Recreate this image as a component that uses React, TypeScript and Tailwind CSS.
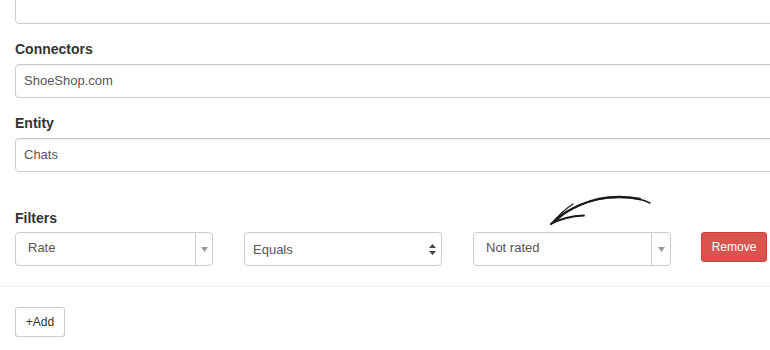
import React from "react";

const inputCls =
  "h-[34px] w-[800px] rounded-[4px] border border-[#cccccc] bg-white shadow-[inset_0_1px_1px_rgba(0,0,0,0.075)] flex items-center pl-[8px] text-[13px] text-[#555555]";

function Caret() {
  return (
    <svg width="7" height="5" viewBox="0 0 7 5">
      <path d="M0 0 L7 0 L3.5 5 Z" fill="#999999" />
    </svg>
  );
}

export default function App() {
  return (
    <div className="relative w-[770px] h-[350px] overflow-hidden bg-white text-[#333333] font-['Liberation_Sans',Arial,sans-serif]">
      <div className="pl-[15px]">
        <div className={"mt-[-10px] " + inputCls} />

        <div className="mt-[15px] mb-[5px] text-[14px] leading-[20px] font-bold">Connectors</div>
        <div className={inputCls}>ShoeShop.com</div>

        <div className="mt-[15px] mb-[5px] text-[14px] leading-[20px] font-bold">Entity</div>
        <div className={inputCls}>Chats</div>

        <div className="mt-[36px] mb-[4px] text-[14px] leading-[20px] font-bold">Filters</div>
        <div className="flex items-start">
          {/* Rate */}
          <div className="flex h-[34px] w-[198px] rounded-[4px] border border-[#cccccc] bg-white text-[13px] text-[#555555]">
            <div className="flex flex-1 items-center pl-[12px] pb-[3px]">Rate</div>
            <div className="flex w-[17px] items-center justify-center border-l border-[#cccccc]">
              <Caret />
            </div>
          </div>
          {/* Equals */}
          <div className="ml-[31px] flex h-[34px] w-[198px] items-center justify-between rounded-[4px] border border-[#cccccc] bg-white pl-[8px] pr-[5px] text-[13px] text-[#555555]">
            <span className="pt-[1px]">Equals</span>
            <svg width="7" height="11" viewBox="0 0 7 11">
              <path d="M0 4 L7 4 L3.5 0 Z" fill="#444444" />
              <path d="M0 7 L7 7 L3.5 11 Z" fill="#444444" />
            </svg>
          </div>
          {/* Not rated */}
          <div className="ml-[31px] flex h-[34px] w-[198px] rounded-[4px] border border-[#cccccc] bg-white text-[13px] text-[#555555]">
            <div className="flex flex-1 items-center pl-[12px] pb-[3px]">Not rated</div>
            <div className="flex w-[19px] items-center justify-center border-l border-[#cccccc]">
              <Caret />
            </div>
          </div>
          {/* Remove */}
          <button className="ml-[30px] flex h-[30px] w-[66px] items-center justify-center rounded-[3px] border border-[#d43f3a] bg-[#d9534f] text-[12px] text-white">
            Remove
          </button>
        </div>
      </div>

      <div className="mt-[20px] h-0 border-t border-[#eeeeee]" />

      <div className="pl-[15px] pt-[20px]">
        <button className="flex h-[30px] w-[50px] items-center justify-center rounded-[3px] border border-[#cccccc] bg-white text-[12px] text-[#333333]">
          +Add
        </button>
      </div>

      <svg
        className="absolute left-[540px] top-[190px]"
        width="120"
        height="40"
        viewBox="0 0 120 40"
        fill="none"
        stroke="#1a1a1a"
        strokeLinecap="round"
      >
        <path d="M110 13 C 96 6, 62 5, 40 15 S 18 28, 11 34" strokeWidth="1.5" />
        <path d="M100 9 C 80 5, 58 7, 40 15 S 22 26, 16 30" strokeWidth="2.3" />
        <path d="M11 34 C 20 29, 32 26, 44 25.5" strokeWidth="1.9" />
        <path d="M11 34 C 18 26, 25 19, 33 14" strokeWidth="1.2" />
      </svg>
    </div>
  );
}
